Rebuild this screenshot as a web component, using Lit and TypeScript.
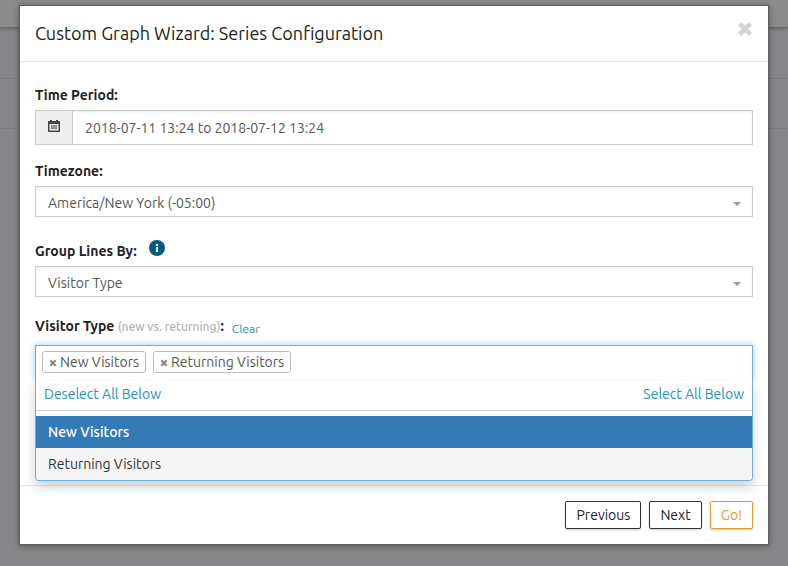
import { LitElement, html, css, svg } from "lit";
import { customElement, state } from "lit/decorators.js";
import { classMap } from "lit/directives/class-map.js";

const caret = html`<svg class="caret" viewBox="0 0 8 4" aria-hidden="true"><path d="M0 0h8L4 4z" fill="#999" /></svg>`;

const cross = svg`<path d="M2.3 2.3l9.4 9.4M11.7 2.3l-9.4 9.4" fill="none" stroke="currentColor" stroke-width="4" />`;

@customElement("app-root")
export class AppRoot extends LitElement {
  @state() private selected = ["New Visitors", "Returning Visitors"];
  @state() private active = "New Visitors";

  private options = ["New Visitors", "Returning Visitors"];

  static styles = css`
    :host {
      display: block;
      font-family: Ubuntu, "Noto Sans", sans-serif;
      font-size: 14px;
      line-height: 20px;
      color: #222;
    }
    * {
      box-sizing: border-box;
    }
    button,
    input,
    select {
      font: inherit;
      color: inherit;
      margin: 0;
      border-radius: 0;
    }
    button {
      background: none;
      border: 0;
      padding: 0;
      cursor: pointer;
    }
    a {
      color: #2191c0;
      text-decoration: none;
    }
    .stage {
      display: grid;
      min-height: 100vh;
      background: #868688;
    }
    .page,
    .layer {
      grid-area: 1 / 1;
    }
    .topbar {
      height: 28px;
      background: #8b8b8b;
      border-bottom: 1px solid #69696b;
      box-shadow: 0 1px 3px rgba(0, 0, 0, 0.25);
    }
    .line {
      height: 51px;
      border-bottom: 1px solid #7b7b7f;
    }
    .line + .line {
      height: 50px;
    }
    .layer {
      padding: 5px 19px 21px;
      z-index: 1;
    }
    .modal {
      background: #fff;
      border: 1px solid #5f5f61;
      box-shadow: 0 1px 6px rgba(0, 0, 0, 0.4);
    }
    header {
      display: flex;
      justify-content: space-between;
      align-items: flex-start;
      padding: 15px;
      border-bottom: 1px solid #e5e5e5;
    }
    h1 {
      margin: 0;
      font-size: 18px;
      line-height: 25px;
      font-weight: 400;
    }
    .close {
      display: flex;
      color: #d3d4d4;
    }
    .close svg {
      width: 16px;
      height: 16px;
    }
    .body {
      display: grid;
      gap: 16px;
      padding: 23px 15px 4px;
    }
    .label {
      display: flex;
      align-items: flex-end;
      margin-bottom: 5px;
    }
    .label label {
      font-weight: 700;
    }
    .label.spaced {
      height: 28px;
    }
    .label.multi {
      height: 24px;
      margin-bottom: 8px;
    }
    .hint {
      font-size: 12px;
      font-weight: 500;
      color: #b3b3b3;
    }
    .clear {
      margin-left: 8px;
      font-size: 12px;
      line-height: 16px;
    }
    .info {
      align-self: flex-start;
      display: flex;
      margin: 7px 0 0 12px;
    }
    .info svg {
      width: 16px;
      height: 16px;
    }
    .box {
      display: flex;
      border: 1px solid #ccc;
      box-shadow: inset 0 1px 2px rgba(0, 0, 0, 0.08);
      color: #555;
    }
    .addon {
      width: 37px;
      background: #eee;
      border-right: 1px solid #ccc;
      display: flex;
      justify-content: center;
      padding-top: 9px;
    }
    .addon svg {
      width: 12px;
      height: 12px;
    }
    .box input,
    .box select {
      flex: 1;
      min-width: 0;
      border: 0;
      outline: 0;
      background: none;
      appearance: none;
      padding: 0 12px;
    }
    .box input {
      height: 33px;
    }
    .box select {
      grid-area: 1 / 1;
      height: 29px;
      padding-top: 2px;
    }
    .choice {
      display: grid;
    }
    .caret {
      grid-area: 1 / 1;
      align-self: center;
      justify-self: end;
      width: 8px;
      height: 4px;
      margin: 4px 11px 0 0;
      pointer-events: none;
    }
    .picker {
      border: 1px solid #66afe9;
      border-bottom: 0;
      box-shadow: 0 0 7px rgba(102, 175, 233, 0.6);
      height: 36px;
      display: flex;
      gap: 7px;
      padding: 5px 6px;
      color: #555;
    }
    .tag {
      display: flex;
      align-items: center;
      gap: 3px;
      height: 22px;
      padding: 0 6px;
      border: 1px solid #bbb;
      border-radius: 3px;
    }
    .tag button {
      display: flex;
      color: #888;
    }
    .tag svg {
      width: 8px;
      height: 8px;
      margin-top: 2px;
    }
    .picker input {
      flex: 1;
      min-width: 0;
      border: 0;
      outline: 0;
      padding: 0;
      background: none;
    }
    .drop {
      position: relative;
      z-index: 1;
      background: #fff;
      border: 1px solid #66afe9;
      border-top: 0;
      border-radius: 0 0 4px 4px;
      box-shadow: 0 6px 12px rgba(0, 0, 0, 0.18);
      overflow: hidden;
    }
    .bulk {
      display: flex;
      justify-content: space-between;
      height: 30px;
      padding: 3px 8px 0;
      margin-bottom: 5px;
      border-bottom: 1px solid #ccc;
    }
    .option {
      display: block;
      width: 100%;
      height: 32px;
      padding: 0 12px;
      text-align: left;
      background: #f4f4f4;
      color: #333;
    }
    .option.active {
      background: #337ab7;
      color: #fff;
      font-weight: 500;
    }
    footer {
      display: flex;
      justify-content: flex-end;
      gap: 8px;
      padding: 15px;
      border-top: 1px solid #e5e5e5;
    }
    .btn {
      height: 28px;
      padding: 0 10px;
      border: 1px solid #333;
      border-radius: 2px;
      background: #fff;
      box-shadow: 0 1px 2px rgba(0, 0, 0, 0.2);
    }
    .btn.go {
      border-color: #f0932b;
      color: #f0932b;
    }
  `;

  private setAll(event: Event, values: string[]) {
    event.preventDefault();
    this.selected = values;
  }

  private toggle(name: string) {
    this.selected = this.selected.includes(name)
      ? this.selected.filter((s) => s !== name)
      : [...this.selected, name];
  }

  render() {
    return html`
      <div class="stage">
        <div class="page" aria-hidden="true">
          <div class="topbar"></div>
          <div class="line"></div>
          <div class="line"></div>
        </div>
        <div class="layer">
          <section class="modal" role="dialog" aria-labelledby="title">
            <header>
              <h1 id="title">Custom Graph Wizard: Series Configuration</h1>
              <button class="close" aria-label="Close">
                <svg viewBox="0 0 14 14">${cross}</svg>
              </button>
            </header>
            <div class="body">
              <div>
                <div class="label"><label for="period">Time Period:</label></div>
                <div class="box">
                  <span class="addon">
                    <svg viewBox="0 0 12 12" aria-hidden="true">
                      <path d="M0 1h12v11H0zM1.5 4v6.5h9V4z" fill="#444" fill-rule="evenodd" />
                      <path d="M2 0h2v2H2zM8 0h2v2H8z" fill="#444" />
                      <path d="M3 5h6v4H3z" fill="#777" />
                      <path d="M3 7h6M5 5v4M7 5v4" stroke="#ccc" stroke-width=".5" />
                    </svg>
                  </span>
                  <input id="period" type="text" value="2018-07-11 13:24 to 2018-07-12 13:24" />
                </div>
              </div>
              <div>
                <div class="label"><label for="zone">Timezone:</label></div>
                <div class="box choice">
                  <select id="zone"><option>America/New York (-05:00)</option></select>
                  ${caret}
                </div>
              </div>
              <div>
                <div class="label spaced">
                  <label for="group">Group Lines By:</label>
                  <button class="info" aria-label="About grouping">
                    <svg viewBox="0 0 16 16">
                      <circle cx="8" cy="8" r="8" fill="#065a82" />
                      <path d="M7 4h2v2H7zM7 7h2v5H7z" fill="#fff" />
                    </svg>
                  </button>
                </div>
                <div class="box choice">
                  <select id="group"><option>Visitor Type</option></select>
                  ${caret}
                </div>
              </div>
              <div>
                <div class="label multi">
                  <label for="types">Visitor Type <span class="hint">(new vs. returning)</span>:</label>
                  <a class="clear" href="#" @click=${(e: Event) => this.setAll(e, [])}>Clear</a>
                </div>
                <div class="picker">
                  ${this.selected.map(
                    (name) => html`<span class="tag">
                      <button aria-label="Remove ${name}" @click=${() => this.toggle(name)}>
                        <svg viewBox="0 0 14 14">${cross}</svg></button
                      >${name}</span>`
                  )}
                  <input id="types" type="text" />
                </div>
                <div class="drop">
                  <div class="bulk">
                    <a href="#" @click=${(e: Event) => this.setAll(e, [])}>Deselect All Below</a>
                    <a href="#" @click=${(e: Event) => this.setAll(e, this.options)}>Select All Below</a>
                  </div>
                  ${this.options.map(
                    (name) => html`<button
                      class=${classMap({ option: true, active: name === this.active })}
                      aria-pressed=${this.selected.includes(name)}
                      @mouseenter=${() => (this.active = name)}
                      @click=${() => this.toggle(name)}
                    >${name}</button>`
                  )}
                </div>
              </div>
            </div>
            <footer>
              <button class="btn">Previous</button>
              <button class="btn">Next</button>
              <button class="btn go">Go!</button>
            </footer>
          </section>
        </div>
      </div>
    `;
  }
}
